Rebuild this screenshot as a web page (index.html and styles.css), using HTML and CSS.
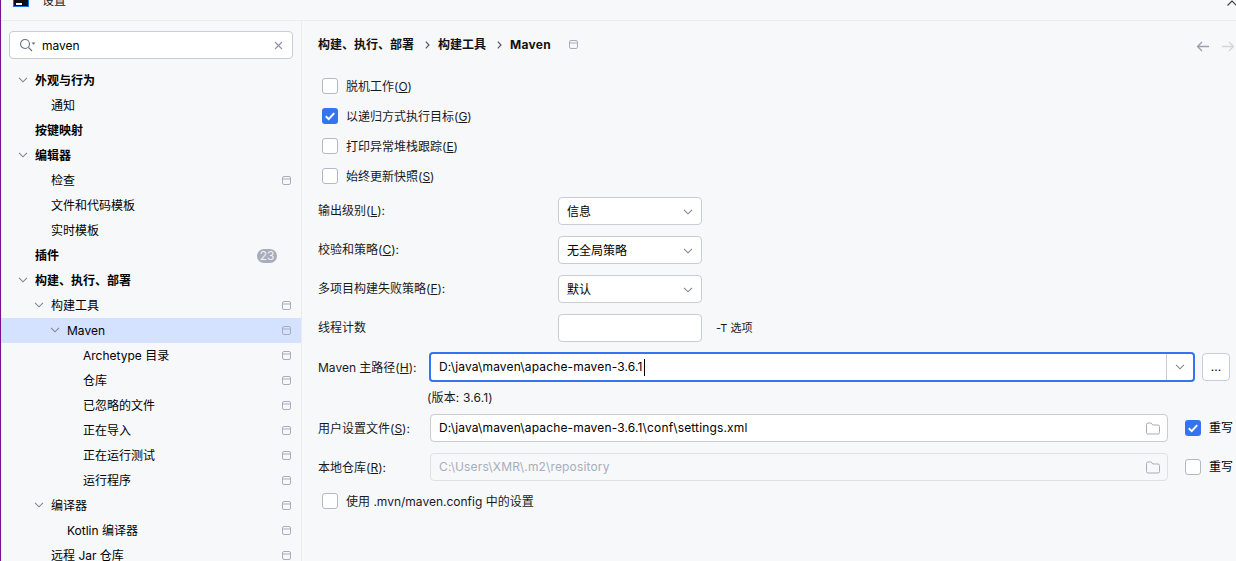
FILE: index.html
```html
<!DOCTYPE html>
<html lang="zh-CN">
<head>
<meta charset="utf-8">
<title>设置</title>
<link rel="stylesheet" href="styles.css">
</head>
<body>
<svg class="defs" width="0" height="0" aria-hidden="true">
  <symbol id="proj" viewBox="0 0 9 9"><path d="M2 .5h5A1.5 1.5 0 0 1 8.500 2v5A1.500 1.500 0 0 1 7 8.500H2A1.500 1.500 0 0 1 .5 7V2A1.500 1.500 0 0 1 2 .5ZM.5 3h8" fill="none" stroke="#a8adbd"/></symbol>
  <symbol id="chev" viewBox="0 0 10 6"><path d="M1 .8l4 4 4-4" fill="none" stroke="#818594" stroke-width="1.100"/></symbol>
  <symbol id="folder" viewBox="0 0 14 13"><path d="M2 1h3.200l1.600 2H12a1.500 1.500 0 0 1 1.500 1.500v6A1.500 1.500 0 0 1 12 12H2A1.500 1.500 0 0 1 .5 10.500v-8A1.500 1.500 0 0 1 2 1Z" fill="none" stroke="#a8adbd"/></symbol>
  <symbol id="check" viewBox="0 0 16 16"><rect width="16" height="16" rx="3" fill="#3574f0"/><path d="M3.800 8.200l2.900 2.900 5.500-6" fill="none" stroke="#fff" stroke-width="2"/></symbol>
</svg>
<div class="window">
  <header class="titlebar">
    <div class="app-icon"><span class="app-dash"></span></div>
    <span class="title">设置</span>
    <svg class="close" width="10" height="6" viewBox="0 0 10 6"><path d="M.5 5.500L5 1l4.500 4.500" fill="none" stroke="#3a3b40" stroke-width="1.100"/></svg>
  </header>
  <div class="main">
    <aside class="sidebar">
      <div class="search">
        <svg class="search-icon" width="17" height="14" viewBox="0 0 17 14"><circle cx="6" cy="6" r="4.500" fill="none" stroke="#6c707e" stroke-width="1.100"/><path d="M9.500 9.500l3.500 3.500" stroke="#6c707e" stroke-width="1.100"/><path d="M12.500 4.500h4l-2 2.200Z" fill="#6c707e"/></svg>
        <span class="search-text">maven</span>
        <svg class="search-clear" width="9" height="9" viewBox="0 0 9 9"><path d="M1 1l7 7M8 1L1 8" stroke="#8c90a0" stroke-width="1.100"/></svg>
      </div>
      <ul class="tree">
        <li class="row l0"><svg class="chev"><use href="#chev"/></svg><b>外观与行为</b></li>
        <li class="row l1"><span class="slot"></span>通知</li>
        <li class="row l0"><span class="slot"></span><b>按键映射</b></li>
        <li class="row l0"><svg class="chev"><use href="#chev"/></svg><b>编辑器</b></li>
        <li class="row l1"><span class="slot"></span>检查<svg class="proj"><use href="#proj"/></svg></li>
        <li class="row l1"><span class="slot"></span>文件和代码模板</li>
        <li class="row l1"><span class="slot"></span>实时模板</li>
        <li class="row l0"><span class="slot"></span><b>插件</b><span class="badge">23</span></li>
        <li class="row l0"><svg class="chev"><use href="#chev"/></svg><b>构建、执行、部署</b></li>
        <li class="row l1"><svg class="chev"><use href="#chev"/></svg>构建工具<svg class="proj"><use href="#proj"/></svg></li>
        <li class="row l2 selected"><svg class="chev"><use href="#chev"/></svg>Maven<svg class="proj"><use href="#proj"/></svg></li>
        <li class="row l3"><span class="slot"></span>Archetype 目录<svg class="proj"><use href="#proj"/></svg></li>
        <li class="row l3"><span class="slot"></span>仓库<svg class="proj"><use href="#proj"/></svg></li>
        <li class="row l3"><span class="slot"></span>已忽略的文件<svg class="proj"><use href="#proj"/></svg></li>
        <li class="row l3"><span class="slot"></span>正在导入<svg class="proj"><use href="#proj"/></svg></li>
        <li class="row l3"><span class="slot"></span>正在运行测试<svg class="proj"><use href="#proj"/></svg></li>
        <li class="row l3"><span class="slot"></span>运行程序<svg class="proj"><use href="#proj"/></svg></li>
        <li class="row l1"><svg class="chev"><use href="#chev"/></svg>编译器<svg class="proj"><use href="#proj"/></svg></li>
        <li class="row l2"><span class="slot"></span>Kotlin 编译器<svg class="proj"><use href="#proj"/></svg></li>
        <li class="row l1"><span class="slot"></span>远程 Jar 仓库<svg class="proj"><use href="#proj"/></svg></li>
      </ul>
    </aside>
    <section class="content">
      <div class="topbar">
        <nav class="crumbs">
          <span>构建、执行、部署</span>
          <svg class="sep" width="5" height="8" viewBox="0 0 5 8"><path d="M.8.7L4 4 .8 7.300" fill="none" stroke="#4a4c55" stroke-width="1.100"/></svg>
          <span>构建工具</span>
          <svg class="sep" width="5" height="8" viewBox="0 0 5 8"><path d="M.8.7L4 4 .8 7.300" fill="none" stroke="#4a4c55" stroke-width="1.100"/></svg>
          <span class="crumb-last">Maven</span>
          <svg class="proj crumb-proj"><use href="#proj"/></svg>
        </nav>
        <div class="nav-arrows">
          <svg width="13" height="11" viewBox="0 0 13 11"><path d="M13 5.500H1.500M6 1L1.500 5.500 6 10" fill="none" stroke="#9a9eae" stroke-width="1.300"/></svg>
          <svg width="13" height="11" viewBox="0 0 13 11"><path d="M0 5.500h11.500M7 1l4.500 4.500L7 10" fill="none" stroke="#d3d5db" stroke-width="1.300"/></svg>
        </div>
      </div>

      <div class="checks">
        <label class="check"><span class="box"></span>脱机工作(<u>O</u>)</label>
        <label class="check"><svg class="tick"><use href="#check"/></svg>以递归方式执行目标(<u>G</u>)</label>
        <label class="check"><span class="box"></span>打印异常堆栈跟踪(<u>E</u>)</label>
        <label class="check"><span class="box"></span>始终更新快照(<u>S</u>)</label>
      </div>

      <div class="selects">
        <div class="form-row"><span class="label">输出级别(<u>L</u>):</span><div class="field select">信息<svg class="select-chev"><use href="#chev"/></svg></div></div>
        <div class="form-row"><span class="label">校验和策略(<u>C</u>):</span><div class="field select">无全局策略<svg class="select-chev"><use href="#chev"/></svg></div></div>
        <div class="form-row"><span class="label">多项目构建失败策略(<u>F</u>):</span><div class="field select">默认<svg class="select-chev"><use href="#chev"/></svg></div></div>
        <div class="form-row"><span class="label">线程计数</span><div class="field select"></div><span class="hint">-T 选项</span></div>
      </div>

      <div class="paths">
        <div class="path-row home-row">
          <span class="plabel">Maven 主路径(<u>H</u>):</span>
          <div class="combo"><span class="combo-text latin">D:\java\maven\apache-maven-3.6.1<i class="caret"></i></span><span class="combo-btn"><svg class="select-chev"><use href="#chev"/></svg></span></div>
          <div class="more">...</div>
        </div>
        <div class="version latin">(版本: 3.6.1)</div>
        <div class="path-row">
          <span class="plabel">用户设置文件(<u>S</u>):</span>
          <div class="field wide latin">D:\java\maven\apache-maven-3.6.1\conf\settings.xml<svg class="folder"><use href="#folder"/></svg></div>
          <label class="override"><svg class="tick"><use href="#check"/></svg>重写</label>
        </div>
        <div class="path-row">
          <span class="plabel">本地仓库(<u>R</u>):</span>
          <div class="field wide disabled latin">C:\Users\XMR\.m2\repository<svg class="folder"><use href="#folder"/></svg></div>
          <label class="override"><span class="box"></span>重写</label>
        </div>
      </div>

      <label class="check last"><span class="box"></span>使用 .mvn/maven.config 中的设置</label>
    </section>
  </div>
</div>
</body>
</html>
```

FILE: styles.css
```css
* { box-sizing: border-box; }
html, body { margin: 0; height: 100%; overflow: hidden; }
body {
  font: 12px/18px Inter, "Noto Sans CJK SC", sans-serif;
  color: #000;
  background: #f7f8fa;
}
.defs { position: absolute; }
.latin { letter-spacing: .15px; }
.window { height: 561px; border-left: 1px solid #7a0f8f; overflow: hidden; display: flex; flex-direction: column; }

.titlebar { height: 21px; flex: none; border-bottom: 1px solid #ebecf0; display: flex; position: relative; overflow: hidden; }
.app-icon { width: 16px; height: 16px; margin: -9px 0 0 12px; background: #111; border: 1px solid #1473e6; position: relative; }
.app-dash { position: absolute; left: 2px; bottom: 1px; width: 6px; height: 2px; background: #fff; }
.title { margin: -8px 0 0 13px; color: #222; }
.close { position: absolute; right: -1px; top: 0; }

.main { flex: 1; display: flex; min-height: 0; }
.sidebar { width: 301px; flex: none; border-right: 1px solid #ebecf0; padding-top: 10px; overflow: hidden; background: #f7f8fa; }
.search { height: 28px; margin: 0 8px; background: #fff; border: 1px solid #c9ccd6; border-radius: 4px; display: flex; align-items: center; padding: 0 9px; }
.search-icon { margin-right: 6px; flex: none; }
.search-text { flex: 1; padding-top: 2px; }
.search-clear { flex: none; }
.tree { list-style: none; margin: 9px 0 0; padding: 0; }
.row { height: 25px; display: flex; align-items: center; padding-right: 10px; white-space: nowrap; }
.l0 { padding-left: 14px; }
.l1 { padding-left: 30px; }
.l2 { padding-left: 46px; }
.l3 { padding-left: 62px; }
.slot { width: 20px; flex: none; }
.chev { width: 10px; height: 6px; margin: 0 7px 2px 3px; flex: none; }
.row b { font-weight: 700; }
.selected { background: #d4e2ff; }
.proj { width: 9px; height: 9px; flex: none; margin-left: auto; }
.badge { margin-left: auto; margin-right: 14px; width: 20px; height: 14px; border-radius: 7px; background: #a8adbd; color: #f0f1f4; font-size: 12px; line-height: 14px; text-align: center; }

.content { flex: 1; min-width: 0; padding-left: 16px; }
.topbar { height: 49px; display: flex; align-items: center; padding-bottom: 1px; }
.crumbs { display: flex; align-items: center; font-weight: 700; color: #111; }
.crumb-last { letter-spacing: .3px; }
.sep { margin: 0 8px 0 11px; flex: none; }
.crumb-proj { margin: 0 0 2px 18px; }
.nav-arrows { margin-left: auto; display: flex; gap: 13px; margin-right: 1px; margin-top: 2px; }

.checks { display: flex; flex-direction: column; gap: 10px; margin-left: 4px; padding-top: 6px; }
.check { display: flex; align-items: center; height: 20px; padding-top: 2px; color: #1a1a1a; }
.box { width: 16px; height: 16px; flex: none; background: #fff; border: 1px solid #b4b8c4; border-radius: 3px; margin-right: 8px; }
.check .box, .check .tick { margin-bottom: 2px; }
.tick { width: 16px; height: 16px; flex: none; margin-right: 8px; }
.selects { margin-top: 11px; display: flex; flex-direction: column; gap: 11px; }
.form-row { display: flex; align-items: center; height: 28px; }
.label { width: 240px; flex: none; padding-bottom: 1px; color: #1a1a1a; }
.field { height: 28px; background: #fff; border: 1px solid #c9ccd6; border-radius: 4px; display: flex; align-items: center; padding-left: 8px; }
.select { width: 144px; flex: none; padding-top: 2px; }
.select-chev { width: 10px; height: 6px; margin-left: auto; margin-right: 8px; flex: none; }
.hint { margin-left: 14px; font-size: 11px; color: #1a1a1a; }

.paths { margin-top: 11px; }
.path-row { display: flex; align-items: center; height: 28px; margin-bottom: 11px; }
.home-row { margin-bottom: 0; }
.plabel { width: 112px; flex: none; padding-top: 2px; color: #1a1a1a; }
.combo { width: 766px; height: 30px; flex: none; margin-left: -1px; background: #fff; border: 2px solid #3574f0; border-radius: 4px; display: flex; align-items: center; }
.combo-text { flex: 1; padding-left: 8px; display: flex; align-items: center; }
.caret { width: 1px; height: 17px; background: #000; margin-left: 1px; }
.combo-btn { width: 27px; height: 100%; flex: none; border-left: 1px solid #c9ccd6; display: flex; align-items: center; }
.combo-btn .select-chev { margin: 0 auto; }
.more { width: 28px; height: 28px; flex: none; margin-left: 7px; background: #fff; border: 1px solid #c9ccd6; border-radius: 4px; text-align: center; line-height: 26px; }
.version { margin: 8px 0 7px 109px; height: 18px; color: #1a1a1a; }
.wide { width: 738px; flex: none; }
.folder { width: 14px; height: 13px; margin-left: auto; margin-right: 7px; flex: none; }
.disabled { background: #f7f8fa; border-color: #dfe1e5; color: #a8adbd; }
.override { display: flex; align-items: center; margin-left: 17px; flex: none; }
.last { margin: -1px 0 0 4px; }
```
